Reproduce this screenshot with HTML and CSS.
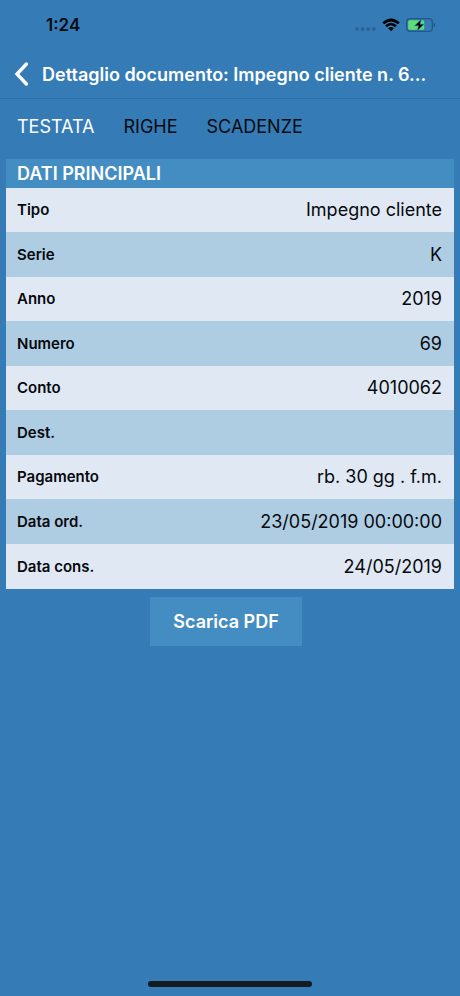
FILE: index.html
```html
<!DOCTYPE html>
<html lang="it">
<head>
  <meta charset="UTF-8">
  <meta name="viewport" content="width=device-width, initial-scale=1">
  <title>Dettaglio documento</title>
  <link rel="stylesheet" href="styles.css">
</head>
<body>
  <div class="status-bar">
    <span class="status-time">1:24</span>
    <div class="status-icons">
      <svg class="icon-signal" width="22" height="14" viewBox="0 0 22 14">
        <g fill="#2c6497">
          <circle cx="3" cy="11" r="2"/>
          <circle cx="8.6" cy="11" r="2"/>
          <circle cx="14.2" cy="11" r="2"/>
          <circle cx="19.8" cy="11" r="2"/>
        </g>
      </svg>
      <svg class="icon-wifi" width="18" height="14" viewBox="0 0 18 14">
        <path d="M0.3 4.4 Q9 -3.4 17.7 4.4 L15.8 6.3 Q9 0.5 2.2 6.3 Z"/>
        <path d="M3.2 7.3 Q9 2.3 14.8 7.3 L12.9 9.2 Q9 5.3 5.1 9.2 Z"/>
        <path d="M6.2 10.2 Q9 8 11.8 10.2 L9 13.2 Z"/>
      </svg>
      <svg class="icon-battery" width="30" height="14" viewBox="0 0 30 14">
        <rect x="0.7" y="0.7" width="25.6" height="12.6" rx="3.4" fill="none" stroke="#235786" stroke-width="1.2"/>
        <rect x="2.2" y="2.2" width="16" height="9.6" rx="1.6" fill="#5ddc78"/>
        <path d="M27.6 4.8 Q29.2 5.4 29.2 7 Q29.2 8.6 27.6 9.2 Z" fill="#235786"/>
        <path d="M15.4 1.2 L8.6 7.8 H12.6 L11.2 12.8 L18 6.2 H14 Z" fill="#000" stroke="#357cb6" stroke-width="0.6"/>
      </svg>
    </div>
  </div>

  <header class="nav-bar">
    <button class="back-button" aria-label="Indietro">
      <svg width="16" height="26" viewBox="0 0 16 26">
        <path d="M12.4 3 L3 13 L12.4 23" fill="none" stroke="#fff" stroke-width="3.4" stroke-linecap="round" stroke-linejoin="miter"/>
      </svg>
    </button>
    <h1 class="nav-title">Dettaglio documento: Impegno cliente n. 6...</h1>
  </header>

  <nav class="tabs">
    <button class="tab tab-active">TESTATA</button>
    <button class="tab">RIGHE</button>
    <button class="tab">SCADENZE</button>
  </nav>

  <main class="content">
    <h2 class="section-title">DATI PRINCIPALI</h2>
    <table class="details">
      <tbody>
        <tr><th scope="row">Tipo</th><td>Impegno cliente</td></tr>
        <tr><th scope="row">Serie</th><td>K</td></tr>
        <tr><th scope="row">Anno</th><td>2019</td></tr>
        <tr><th scope="row">Numero</th><td>69</td></tr>
        <tr><th scope="row">Conto</th><td>4010062</td></tr>
        <tr><th scope="row">Dest.</th><td></td></tr>
        <tr><th scope="row">Pagamento</th><td>rb. 30 gg . f.m.</td></tr>
        <tr><th scope="row">Data ord.</th><td>23/05/2019 00:00:00</td></tr>
        <tr><th scope="row">Data cons.</th><td>24/05/2019</td></tr>
      </tbody>
    </table>
    <button class="download-button">Scarica PDF</button>
  </main>

  <div class="home-indicator"></div>
</body>
</html>
```

FILE: styles.css
```css
* {
  box-sizing: border-box;
}

body {
  display: flex;
  flex-direction: column;
  min-height: 100vh;
  margin: 0;
  background-color: #357cb6;
  color: #06090e;
  font-family: Inter, "Liberation Sans", sans-serif;
  font-size: 18px;
}

button {
  padding: 0;
  border: none;
  background: none;
  color: inherit;
  font: inherit;
  cursor: pointer;
}

.status-bar {
  display: flex;
  justify-content: space-between;
  align-items: center;
  height: 50px;
  padding: 0 24px 0 46px;
}

.status-time {
  font-size: 17px;
  font-weight: 600;
}

.status-icons {
  display: flex;
  align-items: center;
  gap: 6px;
}

.nav-bar {
  display: flex;
  align-items: center;
  gap: 12px;
  height: 49px;
  padding: 0 24px 0 14px;
  border-bottom: 1px solid #2e6ea6;
  color: #fff;
}

.back-button {
  display: flex;
}

.nav-title {
  flex: 1;
  margin: 0;
  font-size: 18px;
  font-weight: 600;
  white-space: nowrap;
}

.tabs {
  display: flex;
  align-items: center;
  gap: 29px;
  height: 54px;
  padding: 0 17px;
}

.tab-active {
  color: #fff;
}

.content {
  display: flex;
  flex-direction: column;
  flex: 1;
  padding: 6px 6px 0;
}

.section-title {
  margin: 0;
  padding: 0 11px;
  background-color: #448dc3;
  color: #fff;
  font-size: 18px;
  font-weight: 600;
  line-height: 29px;
}

.details {
  width: 100%;
  border-collapse: collapse;
}

.details tr {
  height: 44px;
  background-color: #e0e8f3;
}

.details tr:nth-child(even),
.details tr:last-child {
  height: 45px;
}

.details tr:nth-child(even) {
  background-color: #afcde2;
}

.details th {
  padding: 0 11px 1px;
  font-size: 15px;
  font-weight: 600;
  text-align: left;
}

.details td {
  padding: 0 12px 1px;
  text-align: right;
}

.download-button {
  align-self: center;
  margin: 8px 8px 0 0;
  padding: 0 23px;
  background-color: #448dc3;
  color: #fff;
  font-weight: 600;
  line-height: 49px;
}

.home-indicator {
  width: 164px;
  height: 6px;
  margin: 0 auto 9px;
  border-radius: 3px;
  background-color: #141a1e;
}
```
